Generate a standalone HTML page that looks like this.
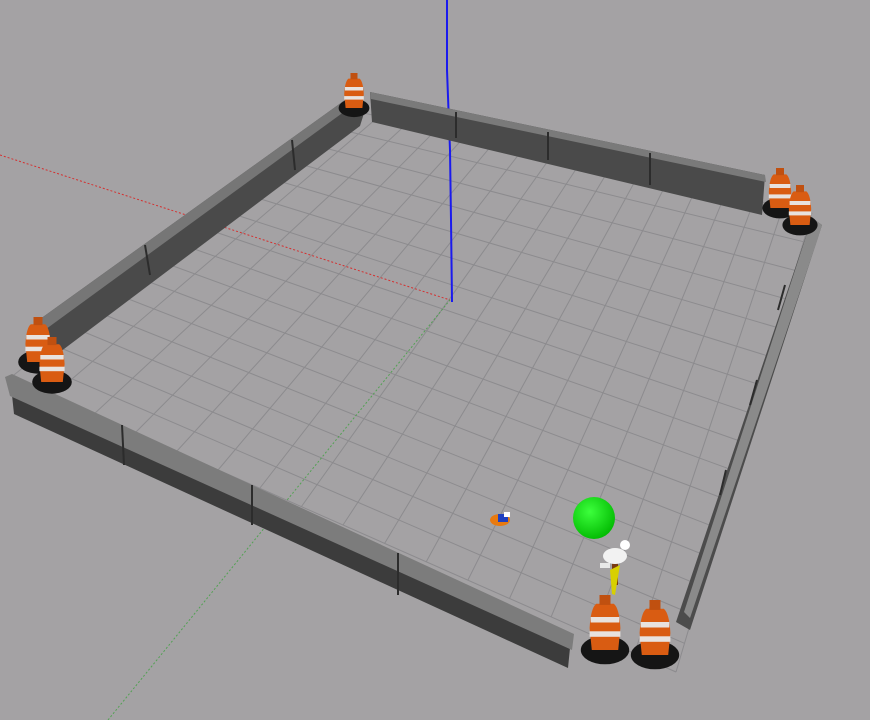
<!DOCTYPE html>
<html><head><style>html,body{margin:0;padding:0;background:#a4a2a4;overflow:hidden}svg{display:block}</style></head>
<body>
<svg id="s" width="870" height="720" viewBox="0 0 870 720" xmlns="http://www.w3.org/2000/svg">
<rect width="870" height="720" fill="#a4a2a4"/>
<g id="grid" stroke="#8c8b8e" stroke-width="1" fill="none"></g>
<line x1="0" y1="155" x2="450" y2="300" stroke="#d43030" stroke-width="1" stroke-dasharray="2,2"/>
<line x1="108" y1="720" x2="450" y2="300" stroke="#3fa040" stroke-width="1" stroke-dasharray="2,2" opacity="0.8"/>
<polyline points="447,0 447,70 450,150 451,220 452,302" stroke="#1a1aee" stroke-width="2" fill="none"/>
<!-- top wall -->
<polygon points="370,92 765,175 762,215 372,122" fill="#4a4a4a"/>
<polygon points="370,92 765,175 766,182 371,99" fill="#7a7a7a"/>
<!-- left wall -->
<polygon points="345,100 365,110 360,126 60,352 40,345 36,322" fill="#4a4a4a"/>
<polygon points="345,100 352,106 42,332 36,322" fill="#767676"/>
<!-- bottom-left wall -->
<polygon points="12,395 570,648 568,668 14,414" fill="#3c3c3c"/>
<polygon points="5,377 12,374 574,634 572,650 10,396" fill="#7c7c7c"/>
<!-- right wall -->
<polygon points="812,218 822,225 690,630 676,622" fill="#4c4c4c"/>
<polygon points="812,218 822,225 818,238 690,618 684,612" fill="#8a8a8a"/>
<!-- wall seams -->
<g stroke="#2c2c2c" stroke-width="2">
<line x1="456" y1="112" x2="456" y2="138"/><line x1="548" y1="132" x2="548" y2="160"/><line x1="650" y1="153" x2="650" y2="185"/>
<line x1="122" y1="425" x2="124" y2="465"/><line x1="252" y1="485" x2="252" y2="525"/><line x1="398" y1="553" x2="398" y2="595"/>
<line x1="292" y1="140" x2="295" y2="170"/><line x1="145" y1="245" x2="150" y2="275"/>
<line x1="785" y1="285" x2="778" y2="310"/><line x1="757" y1="380" x2="750" y2="405"/><line x1="726" y1="470" x2="720" y2="495"/>
</g>
<g id="cones"></g>
<defs><radialGradient id="g" cx="0.4" cy="0.35" r="0.7"><stop offset="0" stop-color="#3cff3c"/><stop offset="1" stop-color="#00b800"/></radialGradient></defs>
<circle cx="594" cy="518" r="21" fill="url(#g)"/>
<g transform="translate(490,512)"><ellipse cx="10" cy="8" rx="10" ry="6" fill="#e87a10"/><rect x="8" y="2" width="10" height="8" fill="#2040c0"/><rect x="14" y="0" width="6" height="5" fill="#fff"/></g>
<g><rect x="612" y="550" width="6" height="35" fill="#7a3a10"/><polygon points="610,570 620,565 615,595 612,594" fill="#d8d000"/><ellipse cx="615" cy="556" rx="12" ry="8" fill="#f2f2f2"/><circle cx="625" cy="545" r="5" fill="#fff"/><rect x="600" y="563" width="10" height="5" fill="#e8e8e8"/></g>
</svg>
<script>
var g=document.getElementById('grid');
var TL=[350,110],TR=[812,213],BR=[676,672],BL=[10,378];
function L(a,b,t){return [a[0]+(b[0]-a[0])*t,a[1]+(b[1]-a[1])*t];}
var N=16,h='';
for(var i=0;i<=N;i++){var t=i/N;var a=L(TL,TR,t),b=L(BL,BR,t);h+='<line x1="'+a[0]+'" y1="'+a[1]+'" x2="'+b[0]+'" y2="'+b[1]+'"/>';
var c=L(TL,BL,t),d=L(TR,BR,t);h+='<line x1="'+c[0]+'" y1="'+c[1]+'" x2="'+d[0]+'" y2="'+d[1]+'"/>';}
g.innerHTML=h;
var cones=[[354,108,0.7],[780,208,0.8],[800,225,0.8],[38,362,0.9],[52,382,0.9],[605,650,1.1],[655,655,1.1]];
var ch='';
cones.forEach(function(c){var x=c[0],y=c[1],s=c[2];
ch+='<ellipse cx="'+x+'" cy="'+y+'" rx="'+22*s+'" ry="'+13*s+'" fill="#151515"/>';
ch+='<path d="M'+(x-12*s)+','+y+' L'+(x-14*s)+','+(y-20*s)+' Q'+(x-13*s)+','+(y-38*s)+' '+(x-8*s)+','+(y-42*s)+' L'+(x+8*s)+','+(y-42*s)+' Q'+(x+13*s)+','+(y-38*s)+' '+(x+14*s)+','+(y-20*s)+' L'+(x+12*s)+','+y+' Z" fill="#d95c12"/>';
ch+='<rect x="'+(x-14*s)+'" y="'+(y-17*s)+'" width="'+28*s+'" height="'+5*s+'" fill="#e8e2de"/>';
ch+='<rect x="'+(x-13*s)+'" y="'+(y-30*s)+'" width="'+26*s+'" height="'+5*s+'" fill="#e8e2de"/>';
ch+='<rect x="'+(x-5*s)+'" y="'+(y-50*s)+'" width="'+10*s+'" height="'+9*s+'" fill="#c05010"/>';});
document.getElementById('cones').innerHTML=ch;
</script>
</body></html>
